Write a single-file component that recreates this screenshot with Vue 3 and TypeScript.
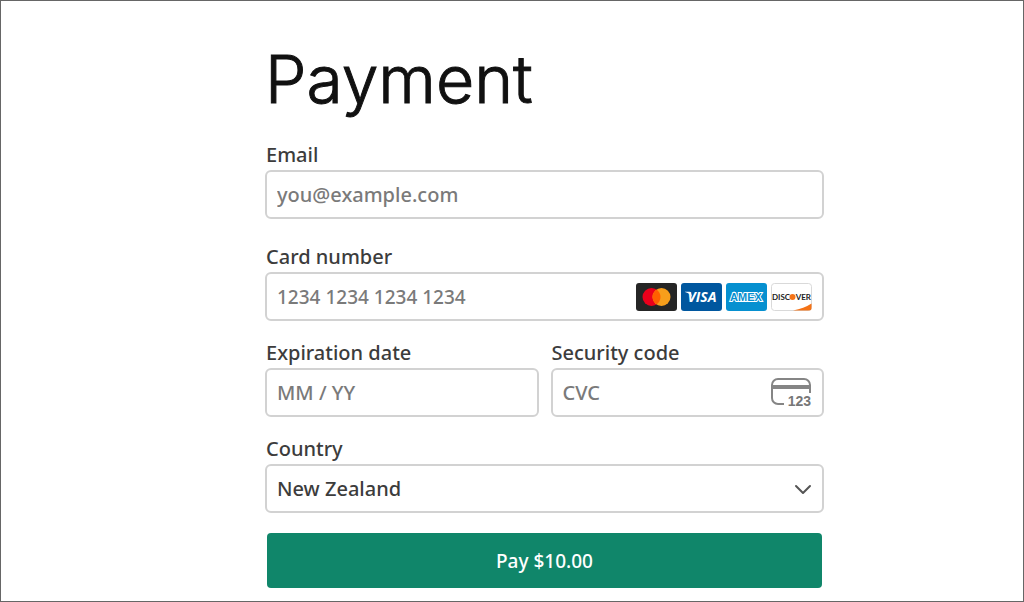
<script setup lang="ts">
import { ref } from 'vue'

const email = ref<string>('')
const cardNumber = ref<string>('')
const expiry = ref<string>('')
const cvc = ref<string>('')
const country = ref<string>('New Zealand')
const countries: string[] = ['New Zealand']
const amount = '$10.00'
</script>

<template>
  <main class="page">
    <form class="payment" @submit.prevent>
      <h1 class="title">Payment</h1>

      <div class="field roomy">
        <label for="email">Email</label>
        <input id="email" v-model="email" class="control" type="email" placeholder="you@example.com" />
      </div>

      <div class="field">
        <label for="card">Card number</label>
        <div class="with-icons">
          <input id="card" v-model="cardNumber" class="control card-number" type="text" inputmode="numeric" placeholder="1234 1234 1234 1234" />
          <div class="icons">
            <svg class="brand" viewBox="0 0 41 28" role="img" aria-label="Mastercard">
              <rect width="41" height="28" rx="3" fill="#252525" />
              <circle cx="15.500" cy="14" r="9" fill="#eb001b" />
              <circle cx="25.500" cy="14" r="9" fill="#f79e1b" />
              <path d="M20.500 6.520a9 9 0 0 1 0 14.960a9 9 0 0 1 0-14.960z" fill="#ff5f00" />
            </svg>
            <svg class="brand" viewBox="0 0 41 28" role="img" aria-label="Visa">
              <rect width="41" height="28" rx="3" fill="#00579f" />
              <path d="M4 8.700h4.500q1.200 0 1.500 1.300l1.400 5q-1.500-4.500-7.400-6z" fill="#fff" />
              <text x="21" y="19" class="visa">VISA</text>
            </svg>
            <svg class="brand" viewBox="0 0 41 28" role="img" aria-label="American Express">
              <rect width="41" height="28" rx="3" fill="#0690d0" />
              <text x="20" y="18" class="amex">AMEX</text>
            </svg>
            <svg class="brand" viewBox="0 0 41 28" role="img" aria-label="Discover">
              <rect x=".5" y=".5" width="40" height="27" rx="3" fill="#fff" stroke="#d9d9d9" />
              <path d="M22 27.500Q33 25.500 40.500 20.500V25a2.500 2.500 0 0 1-2.500 2.500z" fill="#f47216" />
              <text x="1" y="17" class="discover">DISC</text>
              <circle cx="21.500" cy="14" r="3" fill="#f47216" />
              <text x="40" y="17" class="discover end">VER</text>
            </svg>
          </div>
        </div>
      </div>

      <div class="row">
        <div class="field">
          <label for="expiry">Expiration date</label>
          <input id="expiry" v-model="expiry" class="control" type="text" placeholder="MM / YY" />
        </div>
        <div class="field">
          <label for="cvc">Security code</label>
          <div class="with-icons">
            <input id="cvc" v-model="cvc" class="control" type="text" inputmode="numeric" placeholder="CVC" />
            <div class="icons">
              <svg class="cvc-icon" viewBox="0 0 42 30" aria-hidden="true">
                <path d="M14 26H8a6 6 0 0 1-6-6V7a6 6 0 0 1 6-6h26a6 6 0 0 1 6 6v8" fill="none" stroke="#858585" stroke-width="2" />
                <path d="M2 9h38" stroke="#858585" stroke-width="4" />
                <text x="41" y="28" class="digits">123</text>
              </svg>
            </div>
          </div>
        </div>
      </div>

      <div class="field">
        <label for="country">Country</label>
        <div class="with-icons">
          <select id="country" v-model="country" class="control">
            <option v-for="name in countries" :key="name">{{ name }}</option>
          </select>
          <div class="icons">
            <svg class="chevron" viewBox="0 0 18 12" aria-hidden="true">
              <path d="M2 3l7 7 7-7" fill="none" stroke="#555" stroke-width="2" stroke-linecap="round" stroke-linejoin="round" />
            </svg>
          </div>
        </div>
      </div>

      <button class="pay" type="submit">Pay {{ amount }}</button>
    </form>
  </main>
</template>

<style>
body {
  margin: 0;
  background: #fff;
}
</style>

<style scoped>
.page,
.page * {
  box-sizing: border-box;
}

.page {
  min-height: 100vh;
  padding: 38px 199px 12px 264px;
  border: 1px solid #666;
  font-family: "Noto Sans", "Open Sans", sans-serif;
  font-size: 20px;
  font-weight: 500;
  color: #3c3c3c;
}

.payment {
  display: flex;
  flex-direction: column;
  gap: 19px;
}

.title {
  margin: 0 0 4px;
  font-family: Inter, sans-serif;
  font-size: 66px;
  font-weight: 300;
  line-height: 80px;
  color: #111;
  -webkit-text-stroke: 1px #111;
}

.field {
  display: flex;
  flex: 1;
  flex-direction: column;
  gap: 2px;
  min-width: 0;
}

.roomy {
  margin-bottom: 6px;
}

label {
  padding-left: 1px;
  line-height: 26px;
}

.row {
  display: flex;
  gap: 12px;
}

.control {
  display: block;
  width: 100%;
  height: 49px;
  margin: 0;
  padding: 0 10px;
  border: 2px solid #d2d2d2;
  border-radius: 6px;
  outline: none;
  appearance: none;
  background: #fff;
  font: inherit;
  color: #3c3c3c;
}

.control::placeholder {
  color: #7a7a7a;
  opacity: 1;
}

.card-number {
  font-size: 19px;
}

.with-icons {
  position: relative;
}

.icons {
  position: absolute;
  top: 0;
  right: 12px;
  bottom: 0;
  display: flex;
  align-items: center;
  gap: 4px;
  pointer-events: none;
}

.brand {
  width: 41px;
  height: 28px;
}

.visa {
  font: italic 700 14px "Open Sans", sans-serif;
  fill: #fff;
  text-anchor: middle;
}

.amex {
  font: bold 11px "Liberation Sans", Arial, sans-serif;
  fill: #0690d0;
  stroke: #fff;
  stroke-width: 2px;
  paint-order: stroke;
  text-anchor: middle;
}

.discover {
  font: bold 8px Lato, sans-serif;
  fill: #222;
}

.end {
  text-anchor: end;
}

.cvc-icon {
  width: 42px;
  height: 30px;
}

.digits {
  font: bold 14px "Liberation Sans", Arial, sans-serif;
  fill: #777;
  text-anchor: end;
}

.chevron {
  width: 18px;
  height: 12px;
}

.pay {
  height: 55px;
  margin: 1px 2px 0;
  padding: 0 12px;
  border: 0;
  border-radius: 4px;
  background: #10866a;
  font: inherit;
  font-size: 19px;
  color: #fff;
  cursor: pointer;
}
</style>
